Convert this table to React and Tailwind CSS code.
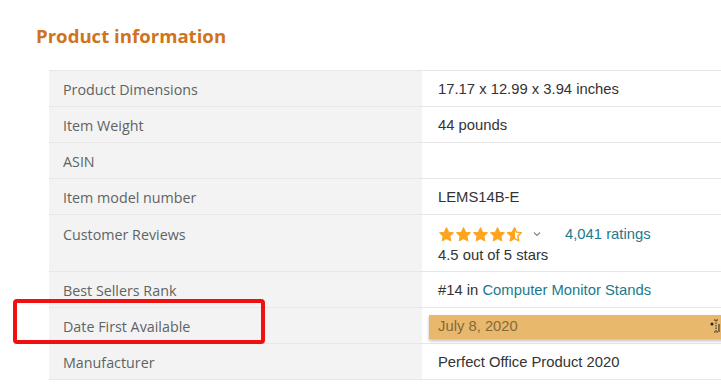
import React from "react";

function Star({ half }) {
  return (
    <svg width="17" height="17" viewBox="0 0 24 24" className="block">
      {half ? (
        <>
          <defs>
            <linearGradient id="hg">
              <stop offset="50%" stopColor="#ffa41c" />
              <stop offset="50%" stopColor="#ffffff" />
            </linearGradient>
          </defs>
          <path d="M12 2.5l2.9 6.2 6.8.8-5 4.7 1.3 6.7L12 17.6l-6 3.3 1.3-6.7-5-4.7 6.8-.8z" fill="url(#hg)" stroke="#ffa41c" strokeWidth="2" strokeLinejoin="round" />
        </>
      ) : (
        <path d="M12 2.5l2.9 6.2 6.8.8-5 4.7 1.3 6.7L12 17.6l-6 3.3 1.3-6.7-5-4.7 6.8-.8z" fill="#ffa41c" stroke="#ffa41c" strokeWidth="1.5" strokeLinejoin="round" />
      )}
    </svg>
  );
}

const label = "pl-[14px] text-[14.3px] text-[#5f6363] bg-[#f3f3f3] w-[373px] shrink-0 border-b border-[#e7e7e7]";
const value = "pl-[16px] text-[14.8px] text-[#333333] flex-1 border-b border-[#e7e7e7]";

function Row({ name, children, h = "h-[36px]", top = false }) {
  return (
    <div className={`flex ${h}`}>
      <div className={`${label} flex ${top ? "items-start pt-[9px]" : "items-center pt-[2px]"}`} style={{ fontFamily: '"Open Sans", sans-serif' }}>
        {name}
      </div>
      <div className={`${value} flex ${top ? "items-start pt-[9px]" : "items-center pt-[2px]"}`} style={{ fontFamily: '"Liberation Sans", Arial, sans-serif' }}>
        {children}
      </div>
    </div>
  );
}

export default function App() {
  return (
    <div className="relative w-[721px] h-[385px] bg-white overflow-hidden">
      <div className="pt-[24px] pl-[36px]">
        <h2 className="text-[18.6px] font-bold text-[#cf741c] leading-[24px]" style={{ fontFamily: '"Open Sans", sans-serif' }}>
          Product information
        </h2>
      </div>
      <div className="ml-[49px] mt-[22px] w-[700px] border-t border-[#e7e7e7]">
        <Row name="Product Dimensions">17.17 x 12.99 x 3.94 inches</Row>
        <Row name="Item Weight">44 pounds</Row>
        <Row name="ASIN"></Row>
        <Row name="Item model number">LEMS14B-E</Row>
        <Row name="Customer Reviews" h="h-[57px]" top>
          <div className="flex flex-col">
            <div className="flex items-center h-[20px]">
              <div className="flex gap-[0px]">
                <Star />
                <Star />
                <Star />
                <Star />
                <Star half />
              </div>
              <svg width="10" height="10" viewBox="0 0 10 10" className="ml-[9px]">
                <path d="M2 3.5l3 3 3-3" fill="none" stroke="#888" strokeWidth="1.2" />
              </svg>
              <span className="ml-[23px] text-[#1a7a8c]">4,041 ratings</span>
            </div>
            <div className="leading-[20px] mt-[1px]">4.5 out of 5 stars</div>
          </div>
        </Row>
        <Row name="Best Sellers Rank">
          <span>#14 in <span className="text-[#1a7a8c]">Computer Monitor Stands</span></span>
        </Row>
        <Row name="Date First Available">
          <div className="-ml-[9px] h-[24px] w-full flex items-center pl-[9px] bg-[#e8b96c] text-[#87683a] shadow-[0_2px_3px_rgba(0,0,0,0.25)]">
            July 8, 2020
          </div>
        </Row>
        <Row name="Manufacturer">Perfect Office Product 2020</Row>
      </div>
      <div className="absolute left-[13px] top-[299px] w-[252px] h-[45px] border-[4px] border-[#f01010] rounded-[4px]"></div>
      <svg className="absolute left-[709px] top-[318px]" width="14" height="16" viewBox="0 0 14 16">
        <circle cx="3" cy="6" r="1.5" fill="#222" />
        <path d="M7 2v12M5 2h4M5 14h4" stroke="#222" strokeWidth="1" fill="none" strokeDasharray="1.5 1" />
        <path d="M10 6v8" stroke="#222" strokeWidth="1" />
      </svg>
    </div>
  );
}
